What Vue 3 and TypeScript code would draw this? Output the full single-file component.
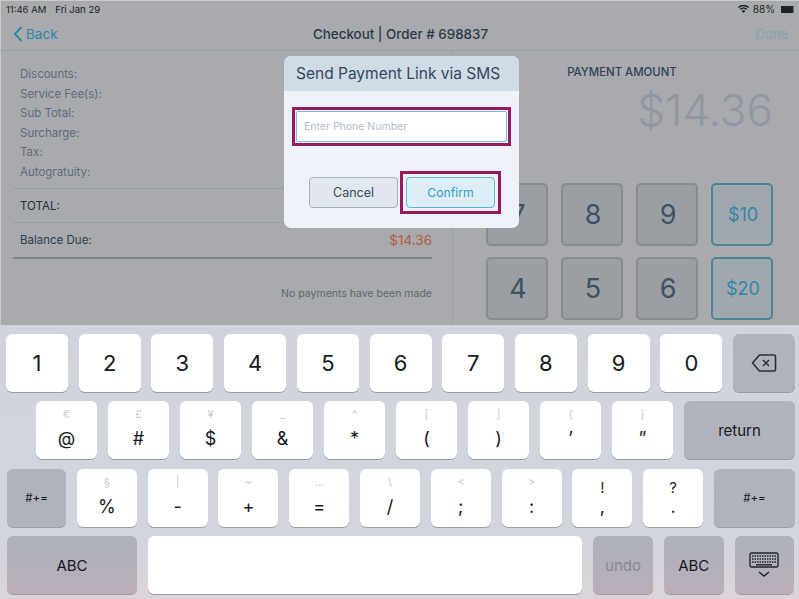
<template>
  <div class="screen">
    <div class="dimmed">
      <div class="status">
        <span class="status-left">11:46 AM<span class="date">Fri Jan 29</span></span>
        <span class="status-right">
          <svg class="wifi" viewBox="0 0 14 10" width="11" height="8">
            <path d="M7 10 4.700 7.400a3.400 3.400 0 0 1 4.600 0zM3.600 6.200 2.300 4.800a7 7 0 0 1 9.400 0l-1.300 1.400a5.100 5.100 0 0 0-6.800 0zM1.200 3.600 0 2.300a10.400 10.400 0 0 1 14 0l-1.200 1.300a8.600 8.600 0 0 0-11.600 0z" fill="#1d2226" />
          </svg>
          <span class="pct">88%</span>
          <span class="battery"></span>
        </span>
      </div>
      <div class="navbar">
        <span class="back">
          <svg viewBox="0 0 10 16" width="10" height="16"><path d="M8.500 1 2 8l6.500 7" fill="none" stroke="#2f86a8" stroke-width="2" /></svg>
          Back
        </span>
        <span class="nav-title">Checkout | Order # 698837</span>
        <span class="done">Done</span>
      </div>
      <div class="content">
        <div class="summary">
          <div class="fees">
            <div v-for="f in fees" :key="f" class="fee">{{ f }}</div>
          </div>
          <div class="total">TOTAL:</div>
          <div class="balance"><span>Balance Due:</span><span class="due">$14.36</span></div>
          <div class="no-pay">No payments have been made</div>
        </div>
        <div class="payment">
          <div class="pay-label">PAYMENT AMOUNT</div>
          <div class="pay-amount">$14.36</div>
          <div class="pad">
            <div v-for="p in padKeys" :key="p" class="pad-key" :class="{ money: p.startsWith('$') }">{{ p }}</div>
          </div>
        </div>
      </div>
      <div class="modal">
        <div class="modal-head">Send Payment Link via SMS</div>
        <div class="modal-body">
          <div class="mark">
            <div class="phone">Enter Phone Number</div>
          </div>
          <div class="modal-actions">
            <div class="btn cancel">Cancel</div>
            <div class="mark mark-confirm">
              <div class="btn confirm">Confirm</div>
            </div>
          </div>
        </div>
      </div>
    </div>

    <div class="keyboard">
      <div class="row row1">
        <div v-for="k in row1" :key="k" class="key num">{{ k }}</div>
        <div class="key dark">
          <svg viewBox="0 0 26 20" width="26" height="20">
            <path d="M8.500 2H23a1.500 1.500 0 0 1 1.500 1.500v13A1.500 1.500 0 0 1 23 18H8.500L1.500 10z" fill="none" stroke="#2b3138" stroke-width="1.600" stroke-linejoin="round" />
            <path d="m12 7 6 6m0-6-6 6" stroke="#2b3138" stroke-width="1.600" />
          </svg>
        </div>
      </div>
      <div class="row row2">
        <div v-for="k in row2" :key="k[1]" class="key dual">
          <span class="alt">{{ k[0] }}</span><span class="main">{{ k[1] }}</span>
        </div>
        <div class="key dark ret">return</div>
      </div>
      <div class="row row3">
        <div class="key dark shift shift-l">#+=</div>
        <div v-for="k in row3" :key="k[1]" class="key dual">
          <span class="alt" :class="{ strong: k[2] }">{{ k[0] }}</span><span class="main">{{ k[1] }}</span>
        </div>
        <div class="key dark shift shift-r">#+=</div>
      </div>
      <div class="row row4">
        <div class="key dark bottom abc-l">ABC</div>
        <div class="key space"></div>
        <div class="key dark bottom undo">undo</div>
        <div class="key dark bottom small">ABC</div>
        <div class="key dark bottom small">
          <svg viewBox="0 0 30 26" width="30" height="26">
            <rect x="1" y="1" width="28" height="14" rx="1.500" fill="none" stroke="#20252b" stroke-width="1.400" />
            <path d="M3 4h24M3 7h24M3 10h24" stroke="#20252b" stroke-width="1.500" stroke-dasharray="1.500 1" />
            <path d="M7 12.800h16" stroke="#20252b" stroke-width="1.400" />
            <path d="m10 20 5 4 5-4" fill="none" stroke="#20252b" stroke-width="1.400" />
          </svg>
        </div>
      </div>
    </div>
  </div>
</template>

<script setup lang="ts">
const fees = ['Discounts:', 'Service Fee(s):', 'Sub Total:', 'Surcharge:', 'Tax:', 'Autogratuity:']
const padKeys = ['7', '8', '9', '$10', '4', '5', '6', '$20']
const row1 = ['1', '2', '3', '4', '5', '6', '7', '8', '9', '0']
const row2: [string, string][] = [
  ['€', '@'], ['£', '#'], ['¥', '$'], ['_', '&'], ['^', '*'],
  ['[', '('], [']', ')'], ['{', '’'], ['}', '”'],
]
const row3: [string, string, boolean?][] = [
  ['§', '%'], ['|', '-'], ['~', '+'], ['…', '='], ['\\', '/'],
  ['<', ';'], ['>', ':'], ['!', ',', true], ['?', '.', true],
]
</script>

<style>
html, body { margin: 0; background: #a8aaac; overflow: hidden; }
</style>

<style scoped>
.screen { width: 799px; height: 599px; display: flex; flex-direction: column; font-family: Inter, "Liberation Sans", sans-serif; }
.dimmed { position: relative; height: 325px; flex: none; background: #a8aaad; color: #34485b; overflow: hidden; box-shadow: inset 1px 1px 0 #c9cacb; }

.status { height: 18px; padding: 0 5px 0 6px; display: flex; justify-content: space-between; align-items: center; font-size: 9.500px; color: #1d2226; }
.date { margin-left: 9px; }
.status-right { display: flex; align-items: center; }
.pct { margin-left: 4px; font-size: 10px; }
.battery { width: 11px; height: 7px; background: #1d2226; margin-left: 6px; border-right: 1px solid #6d7074; padding-right: 1px; }

.navbar { height: 33px; box-sizing: border-box; padding: 0 10px 0 13px; display: flex; align-items: center; justify-content: space-between; border-bottom: 1px solid #9da0a3; font-size: 13.500px; }
.back { display: flex; align-items: center; gap: 3px; color: #2f86a8; width: 70px; }
.nav-title { font-size: 13.400px; font-weight: 500; color: #2b3a49; }
.done { color: #86a2b0; width: 70px; text-align: right; padding-right: 1px; font-size: 13px; }

.content { display: flex; height: 274px; }
.summary { width: 453px; box-sizing: border-box; padding: 14px 20px 0 13px; border-right: 1px solid #9da0a3; font-size: 11.500px; color: #5d6c7b; }
.fees { padding: 0 7px 6px; border-bottom: 1px solid #9a9da0; }
.fee { height: 19.500px; line-height: 19.500px; }
.total { height: 34px; line-height: 34px; padding: 0 7px; color: #26313c; border-bottom: 1px solid #9a9da0; box-sizing: border-box; }
.balance { height: 36px; box-sizing: border-box; padding: 0 0 0 7px; display: flex; justify-content: space-between; align-items: center; color: #2f3f4e; border-bottom: 2px solid #7d858d; }
.due { color: #b65a3c; font-size: 13.500px; }
.no-pay { margin-top: 28px; text-align: right; font-size: 10.500px; color: #5d6670; }

.payment { flex: 1; padding: 14px 26px 0 33px; min-width: 0; }
.pay-label { text-align: center; font-size: 11.400px; font-weight: 500; line-height: 14px; color: #2f4358; margin-right: 15px; }
.pay-amount { margin-top: 5px; text-align: right; font-size: 44px; line-height: 52px; font-weight: 300; color: #8f97a2; }
.pad { margin-top: 47px; display: grid; grid-template-columns: repeat(4, 62px); grid-auto-rows: 63px; gap: 11px 13px; }
.pad-key { display: flex; align-items: center; justify-content: center; background: #9a9fa4; border: 2px solid #868c92; border-radius: 5px; box-sizing: border-box; font-size: 27px; color: #3d5164; padding-left: 2px; }
.pad-key.money { background: #a1a8ad; border-color: #4d8598; color: #2f86a8; font-size: 18px; }

.modal { position: absolute; left: 284px; top: 56px; width: 235px; height: 172px; border-radius: 7px; overflow: hidden; background: #eef3f9; display: flex; flex-direction: column; }
.modal-head { height: 35px; line-height: 35px; flex: none; padding-left: 12px; background: #cfdbe5; font-size: 15.500px; color: #33495f; }
.modal-body { padding: 16px 8px 0; }
.mark { border: 3px solid #981a5e; padding: 1px; box-sizing: border-box; }
.phone { height: 31px; line-height: 29px; box-sizing: border-box; padding-left: 7px; background: #fff; border: 1px solid #7fbdd2; border-radius: 2px; font-size: 10.500px; color: #b3bcc8; }
.modal-actions { margin-top: 25px; padding-left: 17px; display: flex; align-items: center; gap: 2px; }
.btn { width: 89px; height: 31px; line-height: 29px; box-sizing: border-box; text-align: center; border-radius: 4px; font-size: 12.500px; }
.cancel { background: #e2e7ee; border: 1px solid #a8b2bc; color: #33495f; }
.mark-confirm { padding: 3px; }
.confirm { background: #ddeef6; border: 1px solid #5fb6d2; color: #2f9fc4; font-size: 12.200px; }

.keyboard { flex: 1; padding-top: 9px; display: flex; flex-direction: column; gap: 9.400px; background: linear-gradient(#d0d3dc 0%, #d1d5de 70%, #dcd3da 100%); }
.row { display: flex; height: 58px; flex: none; }
.row1 { padding: 0 4px 0 6px; gap: 10.700px; }
.row2 { padding: 0 4px 0 36px; gap: 11px; }
.row3 { padding: 0 4px 0 7px; gap: 10.800px; }
.row4 { padding: 0 4px 0 7px; gap: 11px; }
.key { flex: 1 1 0; min-width: 0; background: #fff; border-radius: 6px; box-shadow: 0 1px 0 #9b9da3; display: flex; align-items: center; justify-content: center; color: #16191d; box-sizing: border-box; }
.num { font-size: 22px; }
.dark { background: #aeb3bc; }
.ret { flex: none; width: 111px; font-size: 15px; }
.dual { flex-direction: column; justify-content: flex-start; padding-top: 3px; }
.alt { height: 20px; line-height: 20px; font-size: 11px; color: #c9ccd0; }
.alt.strong { box-sizing: border-box; padding-top: 6px; color: #26292e; font-size: 15px; }
.main { margin-top: 4px; line-height: 22px; font-size: 18px; }
.shift { flex: none; font-size: 11.500px; }
.shift-l { width: 59px; }
.shift-r { width: 81px; }
.bottom { background: linear-gradient(#adb1b9, #b9aeb9); font-size: 15px; }
.abc-l { flex: none; width: 130px; }
.space { flex: none; width: 434px; }
.undo { flex: none; width: 60px; color: #858a93; }
.small { flex: none; width: 59.500px; }
</style>
